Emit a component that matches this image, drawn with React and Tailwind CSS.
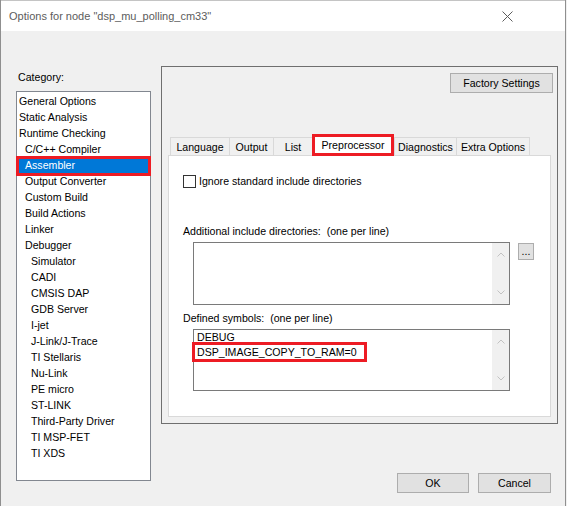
import React from "react";

const items = [
  ["General Options", 0],
  ["Static Analysis", 0],
  ["Runtime Checking", 0],
  ["C/C++ Compiler", 1],
  ["Assembler", 1, true],
  ["Output Converter", 1],
  ["Custom Build", 1],
  ["Build Actions", 1],
  ["Linker", 1],
  ["Debugger", 1],
  ["Simulator", 2],
  ["CADI", 2],
  ["CMSIS DAP", 2],
  ["GDB Server", 2],
  ["I-jet", 2],
  ["J-Link/J-Trace", 2],
  ["TI Stellaris", 2],
  ["Nu-Link", 2],
  ["PE micro", 2],
  ["ST-LINK", 2],
  ["Third-Party Driver", 2],
  ["TI MSP-FET", 2],
  ["TI XDS", 2],
];

const indent = ["pl-[2px]", "pl-[8px]", "pl-[14px]"];

function ChevUp() {
  return (
    <svg width="8" height="5" viewBox="0 0 8 5">
      <polyline points="0.5,4.5 4,1 7.5,4.5" fill="none" stroke="#c2c2c2" strokeWidth="1" />
    </svg>
  );
}
function ChevDown() {
  return (
    <svg width="8" height="5" viewBox="0 0 8 5">
      <polyline points="0.5,0.5 4,4 7.5,0.5" fill="none" stroke="#c2c2c2" strokeWidth="1" />
    </svg>
  );
}

function Scrollbar() {
  return (
    <div className="w-[17px] h-full bg-[#f0f0f0] flex flex-col justify-between items-center py-[9px]">
      <ChevUp />
      <ChevDown />
    </div>
  );
}

function Tab({ label, w, last }) {
  return (
    <div
      className={`h-[18px] leading-[16px] border-t border-l border-[#d9d9d9] bg-[#f0f0f0] flex items-center justify-center ${last ? "border-r" : ""}`}
      style={{ width: w }}
    >
      {label}
    </div>
  );
}

export default function App() {
  return (
    <div className="w-[567px] h-[506px] bg-[#f0f0f0] font-['Liberation_Sans',Arial,sans-serif] text-[10.6px] text-black overflow-hidden">
      <div className="w-[566px] h-[506px] border-l border-r border-[#8f8f8f] flex flex-col">
        {/* Title bar */}
        <div className="h-[31px] shrink-0 bg-white border-t border-[#c4c4c4] flex items-center justify-between pl-[8px] pr-[52px]">
          <span className="text-[11px] text-[#5c5c5c]">Options for node "dsp_mu_polling_cm33"</span>
          <svg width="11" height="11" viewBox="0 0 11 11">
            <line x1="0.5" y1="0.5" x2="10.5" y2="10.5" stroke="#5c5c5c" strokeWidth="1" />
            <line x1="10.5" y1="0.5" x2="0.5" y2="10.5" stroke="#5c5c5c" strokeWidth="1" />
          </svg>
        </div>

        {/* Body */}
        <div className="flex flex-1">
          {/* Left column */}
          <div className="pl-[15px] flex flex-col">
            <div className="mt-[39px] h-[14px] leading-[14px] pl-[2px]">Category:</div>
            <div className="mt-[7px] relative w-[135px] h-[390px] border border-[#828790] bg-white pt-[1px]">
              {items.map(([label, lvl, sel]) => (
                <div
                  key={label}
                  className={`h-[16px] leading-[16px] whitespace-nowrap ${indent[lvl]} ${sel ? "bg-[#0078d7] text-white" : ""}`}
                >
                  {label}
                </div>
              ))}
              <div className="absolute left-[-1px] top-[64px] w-[135px] h-[20px] border-[3px] border-[#ed1c24]" />
            </div>
          </div>

          {/* Right column */}
          <div className="ml-[10px] mt-[35px] w-[397px] flex flex-col">
            <div className="h-[358px] border border-[#6f6f6f] flex flex-col">
              <div className="flex justify-end pt-[6px] pr-[4px]">
                <div className="w-[103px] h-[20px] leading-[16px] border border-[#adadad] bg-[#e1e1e1] flex items-center justify-center">
                  Factory Settings
                </div>
              </div>

              <div className="mt-[41px] ml-[6px] w-[383px] flex flex-col">
                <div className="relative z-10 flex items-end h-[21px] pl-[2px]">
                  <Tab label="Language" w={59} />
                  <Tab label="Output" w={44} />
                  <Tab label="List" w={39} />
                  <div className="w-[82px] h-[22px] leading-[16px] -mb-[1px] bg-white border-[3px] border-[#ed1c24] flex items-center justify-center">
                    Preprocessor
                  </div>
                  <Tab label="Diagnostics" w={62} />
                  <Tab label="Extra Options" w={74} last />
                </div>

                <div className="h-[262px] border border-[#d9d9d9] bg-white flex flex-col">
                  <div className="mt-[19px] ml-[14px] h-[13px] leading-[13px] flex items-center gap-[3px]">
                    <div className="w-[13px] h-[13px] border border-[#333333] bg-white" />
                    <span>Ignore standard include directories</span>
                  </div>

                  <div className="mt-[36px] ml-[14px] h-[14px] leading-[14px]">
                    Additional include directories:&nbsp; (one per line)
                  </div>

                  <div className="mt-[4px] ml-[24px] flex items-start gap-[8px]">
                    <div className="w-[317px] h-[63px] border border-[#7a7a7a] bg-white flex justify-end">
                      <Scrollbar />
                    </div>
                    <div className="mt-[1px] w-[16px] h-[17px] border border-[#adadad] bg-[#e1e1e1] flex items-center justify-center leading-none">
                      ...
                    </div>
                  </div>

                  <div className="mt-[6px] ml-[14px] h-[14px] leading-[14px]">
                    Defined symbols:&nbsp; (one per line)
                  </div>

                  <div className="mt-[4px] ml-[24px] relative w-[317px] h-[62px] border border-[#7a7a7a] bg-white flex">
                    <div className="flex-1 pl-[3px] leading-[15px]">
                      <div>DEBUG</div>
                      <div>DSP_IMAGE_COPY_TO_RAM=0</div>
                    </div>
                    <Scrollbar />
                    <div className="absolute left-[-2px] top-[12px] w-[175px] h-[20px] border-[3px] border-[#ed1c24]" />
                  </div>
                </div>
              </div>
            </div>

            <div className="mt-[49px] flex justify-end gap-[9px] pr-[7px]">
              <div className="w-[72px] h-[20px] leading-[16px] border border-[#adadad] bg-[#e1e1e1] flex items-center justify-center">
                OK
              </div>
              <div className="w-[73px] h-[20px] leading-[16px] border border-[#adadad] bg-[#e1e1e1] flex items-center justify-center">
                Cancel
              </div>
            </div>
          </div>
        </div>
      </div>
    </div>
  );
}
